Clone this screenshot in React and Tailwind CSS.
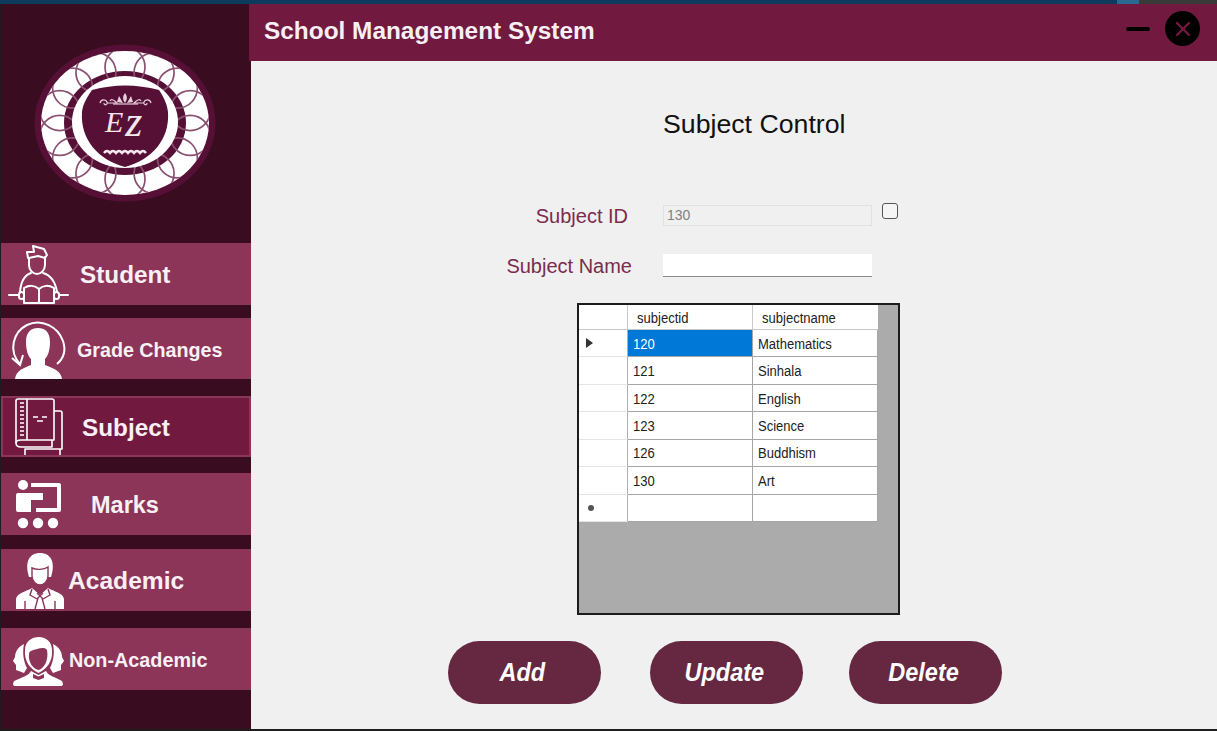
import React from 'react';

const FONT = "font-['Liberation_Sans',Arial,sans-serif]";

/* ===== SIDEBAR ICONS (viewBox is page x / row-local y) ===== */
const StudentIcon = () => (
  <g fill="none" stroke="#fff" strokeWidth="2" strokeLinejoin="round" strokeLinecap="round">
    <path d="M28 15 L27 9 L34 9 L33 3 L44 6 L47 12 L45 15 L38 13 L29 15" />
    <path d="M29 15 V22 C29 27 33 31 37 31 C41 31 45 27 45 22 V14" />
    <path d="M31 30 C25 32 21 37 20 49" />
    <path d="M43 30 C50 32 55 37 57 49" />
    <path d="M24 45 C29 42 35 42 39 46 C43 42 49 42 54 45 V60 H24 Z" />
    <path d="M39 46 V60" />
    <path d="M9 52 H19 M59 52 H68" />
    <rect x="19" y="49" width="5" height="7" rx="2.5" />
    <rect x="54" y="49" width="5" height="7" rx="2.5" />
  </g>
);

const GradeIcon = () => (
  <g>
    <path d="M20 46 C8 33 13 14 27 7 C42 0 58 9 63 23 C66 32 64 40 57 46" fill="none" stroke="#fff" strokeWidth="2" />
    <path d="M12 40 L20 47 L23 37" fill="none" stroke="#fff" strokeWidth="2" />
    <path d="M15 61 C16 52 24 50 31 47 V41 C28 38 26 32 26 24 C26 14 31 10 38 10 C45 10 50 14 50 24 C50 32 48 38 45 41 V47 C52 50 61 52 62 61 Z" fill="#fff" />
  </g>
);

const SubjectIcon = () => (
  <g fill="none" stroke="#fff" strokeWidth="1.6" strokeLinejoin="round">
    <path d="M16 3 H50 Q52 3 52 5 V44 H19 Q14 44 14 47 Q14 51 19 51 H50 V44" />
    <path d="M14 47 V5 Q14 3 16 3" />
    <path d="M52 15 H58 Q60 15 60 17 V53 H23 V60 M58 53 V60" />
    <path d="M25 3 V44" />
    <path d="M18 7 H22 M18 11 H22 M18 15 H22 M18 19 H22 M18 23 H22 M18 27 H22 M18 31 H22 M18 35 H22 M18 39 H22" strokeWidth="1.3" />
    <path d="M31 21 H36 M40 21 H45 M35 25 H41" />
  </g>
);

const MarksIcon = () => (
  <g fill="#fff">
    <circle cx="23" cy="12" r="5" />
    <path d="M18 20 H43 V27 H31 V39 H18 Q16 39 16 37 V22 Q16 20 18 20 Z" />
    <path d="M31 10 H59 Q61 10 61 12 V37 Q61 39 59 39 H36 V35 H57 V14 H31 Z" />
    <circle cx="23" cy="50" r="5.2" />
    <circle cx="38" cy="50" r="5.2" />
    <circle cx="53" cy="50" r="5.2" />
  </g>
);

const AcademicIcon = () => (
  <g>
    <path d="M29 28 C24 12 30 4 40 4 C50 4 56 12 51 28 Z" fill="#fff" />
    <path d="M32 19 C36 21 44 21 48 18 V27 C48 32 44 36 40 36 C36 36 32 32 32 27 Z" fill="#fff" stroke="#8c3558" strokeWidth="1.4" />
    <path d="M16 60 V50 C17 44 25 43 32 39 L40 46 L48 39 C55 43 63 44 64 50 V60 Z" fill="#fff" />
    <path d="M32 40 L30 46 L37 50 L43 44 M48 40 L50 46 L43 50 L37 44 M38 49 L35 60 M42 49 L45 60 M25 52 V60 M55 52 V60" fill="none" stroke="#8c3558" strokeWidth="1.4" />
  </g>
);

const NonAcademicIcon = () => (
  <g>
    <path d="M24 16 C18 19 15 24 15 29 L13 33 L16 37 L16 42 L24 45 L27 40 C24 34 22 26 24 16 Z" fill="#fff" />
    <path d="M53 16 C59 19 62 24 62 29 L64 33 L61 37 L61 42 L53 45 L50 40 C53 34 55 26 53 16 Z" fill="#fff" />
    <path d="M38.5 45 C30 41 24 33 25 22 C25 13 32 9 39 9 C46 9 52 14 52 22 C53 33 47 41 38.5 45 Z" fill="#fff" />
    <path d="M29 26 C29 23 33 22 37 21 C41 20 45 19 47 22 C49 32 44 41 38.5 42 C33 41 28 34 29 26 Z" fill="#8c3558" />
    <path d="M31 43 L38.5 47 L46 43 C48 47 52 48 56 50 L62 53 L63 56 Q63 58 61 58 H15 Q13 58 13 56 L14 53 L21 50 C25 48 29 47 31 43 Z" fill="#fff" />
    <path d="M33 46 L38.5 48.5 L44 46 V50 L38.5 52 L33 50 Z" fill="#8c3558" />
  </g>
);

const menu = [
  { label: 'Student', Icon: StudentIcon, box: 'mt-0 h-[62px] bg-[#8c3558]', text: 'ml-[11px] pt-[2px] text-[24.3px]' },
  { label: 'Grade Changes', Icon: GradeIcon, box: 'mt-[13px] h-[61px] bg-[#8c3558]', text: 'ml-[8px] pt-[4px] text-[19.7px]' },
  { label: 'Subject', Icon: SubjectIcon, box: 'mt-[17px] h-[61px] bg-[#72193f] border-2 border-[#8c3558]', text: 'ml-[11px] pt-[4px] text-[24.3px]' },
  { label: 'Marks', Icon: MarksIcon, box: 'mt-[16px] h-[62px] bg-[#8c3558]', text: 'ml-[22px] pt-[4px] text-[23.5px]' },
  { label: 'Academic', Icon: AcademicIcon, box: 'mt-[14px] h-[62px] bg-[#8c3558]', text: '-ml-[1px] pt-[2px] text-[24.6px]' },
  { label: 'Non-Academic', Icon: NonAcademicIcon, box: 'mt-[17px] h-[62px] bg-[#8c3558]', text: 'ml-0 pt-[4px] text-[19.8px]' },
];

/* ===== LOGO ===== */
const Logo = () => {
  const scallops = Array.from({ length: 14 }, (_, i) => {
    const a = (i / 14) * Math.PI * 2 - Math.PI / 2;
    return { cx: 125 + Math.cos(a) * 67, cy: 123 + Math.sin(a) * 56 };
  });
  return (
    <svg width="250" height="239" viewBox="1 4 250 239">
      <ellipse cx="125" cy="123" rx="90.5" ry="78.5" fill="#561036" />
      <clipPath id="ring">
        <ellipse cx="125" cy="123" rx="84" ry="72" />
      </clipPath>
      <ellipse cx="125" cy="123" rx="84" ry="72" fill="#fff" />
      <ellipse cx="125" cy="123" rx="61" ry="52" fill="#561036" />
      <g clipPath="url(#ring)" fill="none" stroke="#8a5070" strokeWidth="1.7">
        {scallops.map((s, i) => (
          <circle key={i} cx={s.cx} cy={s.cy} r="20" />
        ))}
      </g>
      <ellipse cx="125" cy="122" rx="53" ry="46" fill="#fff" />
      <path d="M92 90 Q125 81 159 90 C163 96 167 103 168 112 C170 140 151 160 125 167 C99 160 80 140 82 112 C83 103 88 96 92 90 Z" fill="#561036" />
      <g fill="none" stroke="#e7cfdb" strokeWidth="1.2">
        <path d="M100 103 C101 99 106 99 107 102 C108 105 104 106 104 103 M107 103 H117 C113 99 111 99 110 101" />
        <path d="M151 103 C150 99 145 99 144 102 C143 105 147 106 147 103 M144 103 H134 C138 99 140 99 141 101" />
        <path d="M113 104 H138" />
      </g>
      <path d="M125 93 C128 97 127 100 125 103 C123 100 122 97 125 93 Z M119 96 L123 103 L117 102 Z M131 96 L127 103 L133 102 Z" fill="#e7cfdb" />
      <path d="M104 153 q3 -4 6 0 q3 -4 6 0 q3 -4 6 0 q3 -4 6 0 q3 -4 6 0 q3 -4 6 0 q3 -4 6 0" fill="none" stroke="#f4e6ed" strokeWidth="2.4" />
      <text x="105" y="132" fill="#f4e6ed" fontStyle="italic" fontFamily="'Liberation Serif', serif">
        <tspan fontSize="30">E</tspan>
        <tspan dx="2" dy="4" fontSize="44">z</tspan>
      </text>
    </svg>
  );
};

/* ===== GRID DATA ===== */
const rows = [
  ['120', 'Mathematics'],
  ['121', 'Sinhala'],
  ['122', 'English'],
  ['123', 'Science'],
  ['126', 'Buddhism'],
  ['130', 'Art'],
  ['', ''],
];

const CellText = ({ children }) => (
  <span className="inline-block origin-left scale-x-[0.93] text-[14px] pt-[1px] whitespace-nowrap">{children}</span>
);

const SubjectGrid = () => (
  <div className="ml-[326px] mt-[25px] w-[323px] h-[312px] border-2 border-[#1c1c1c] bg-[#ababab]">
    <div className="grid w-[299px] grid-cols-[49px_125px_125px] grid-rows-[25px_repeat(7,27.43px)] leading-none text-[#222]">
      <div className="bg-white border-r border-b border-[#c8c8c8]" />
      <div className="bg-white border-r border-b border-[#c8c8c8] flex items-center pl-[9px]"><CellText>subjectid</CellText></div>
      <div className="bg-white border-b border-[#c8c8c8] flex items-center pl-[9px]"><CellText>subjectname</CellText></div>
      {rows.map((r, i) => (
        <React.Fragment key={i}>
          <div className="bg-white border-r border-b border-r-[#b0b0b0] border-b-[#e4e4e4] flex items-center pl-[7px]">
            {i === 0 && <div className="w-0 h-0 border-y-[5px] border-y-transparent border-l-[7px] border-l-[#333]" />}
            {i === 6 && <div className="ml-[2px] w-[6px] h-[6px] rounded-full bg-[#555]" />}
          </div>
          <div className={`border-r border-b border-[#a5a5a5] flex items-center pl-[5px] ${i === 0 ? 'bg-[#0078d7] text-white' : 'bg-white'}`}><CellText>{r[0]}</CellText></div>
          <div className="bg-white border-r border-b border-[#a5a5a5] flex items-center pl-[5px]"><CellText>{r[1]}</CellText></div>
        </React.Fragment>
      ))}
    </div>
  </div>
);

const PillButton = ({ label, className }) => (
  <button className={`${className} w-[153px] h-[63px] pr-[4px] rounded-[32px] bg-[#652840] text-white text-[25px] font-bold italic`}>
    <span className="inline-block scale-x-[0.94]">{label}</span>
  </button>
);

export default function App() {
  return (
    <div className={`${FONT} w-[1217px] h-[731px] flex flex-col overflow-hidden bg-[#1d1d1d]`}>

      {/* ===== WINDOW TOP STRIP ===== */}
      <div className="h-[4px] flex shrink-0">
        <div className="w-[1117px] bg-[#0d3b5e]" />
        <div className="w-[22px] bg-[#2a6a92]" />
        <div className="flex-1 bg-[#3a3a3a]" />
      </div>

      <div className="flex-1 flex min-h-0">
        {/* ===== SIDEBAR ===== */}
        <aside className="ml-px w-[250px] shrink-0 bg-[#3a0c20] text-[#f8f0f4]">
          <Logo />
          {menu.map(({ label, Icon, box, text }) => (
            <div key={label} className={`${box} flex items-center overflow-hidden`}>
              <svg width="68" height="62" viewBox="1 0 68 62" className="shrink-0">
                <Icon />
              </svg>
              <span className={`${text} font-bold whitespace-nowrap`}>{label}</span>
            </div>
          ))}
        </aside>

        {/* ===== MAIN ===== */}
        <main className="flex-1 bg-[#f0f0f0] flex flex-col min-w-0">
          <header className="relative -ml-[2px] h-[57px] shrink-0 bg-[#72193f] flex items-center pl-[15px] pb-[2px]">
            <h1 className="text-[24.4px] font-bold text-[#f6f0f3] whitespace-nowrap">School Management System</h1>
            <div className="ml-auto flex items-center mr-[17px] -mt-[6px]">
              <div className="w-[24px] h-[4px] rounded-full bg-black mr-[15px]" />
              <div className="w-[35px] h-[35px] rounded-full bg-black flex items-center justify-center">
                <svg width="16" height="16" viewBox="0 0 16 16">
                  <path d="M2 2 L14 14 M14 2 L2 14" stroke="#72193f" strokeWidth="2.4" strokeLinecap="round" />
                </svg>
              </div>
            </div>
          </header>

          <h2 className="ml-[412px] mt-[45px] h-[36px] leading-[36px] text-[26.7px] text-[#111] whitespace-nowrap">Subject Control</h2>

          {/* ===== FORM ===== */}
          <div className="mt-[63px] flex items-start">
            <label className="w-[377px] text-right text-[20px] leading-[22px] text-[#7b2c4e]">Subject ID</label>
            <input
              disabled
              defaultValue="130"
              className="ml-[35px] w-[209px] h-[21px] border border-[#e2e2e2] bg-[#f0f0f0] px-[3px] text-[14px] text-[#808080]"
            />
            <div className="ml-[10px] -mt-[2px] w-[16px] h-[16px] rounded-[3px] border border-[#555] bg-[#f5f5f5]" />
          </div>
          <div className="mt-[27px] flex items-start">
            <label className="w-[381px] text-right text-[20px] leading-[24px] text-[#7b2c4e]">Subject Name</label>
            <input className="ml-[31px] w-[209px] h-[23px] border-b border-[#8a8a8a] bg-white" />
          </div>

          <SubjectGrid />

          {/* ===== ACTIONS ===== */}
          <div className="ml-[197px] mt-[26px] flex">
            <PillButton label="Add" />
            <PillButton label="Update" className="ml-[49px]" />
            <PillButton label="Delete" className="ml-[46px]" />
          </div>
        </main>
      </div>

      <div className="h-[2px] shrink-0 bg-[#1d1d1d]" />
    </div>
  );
}
